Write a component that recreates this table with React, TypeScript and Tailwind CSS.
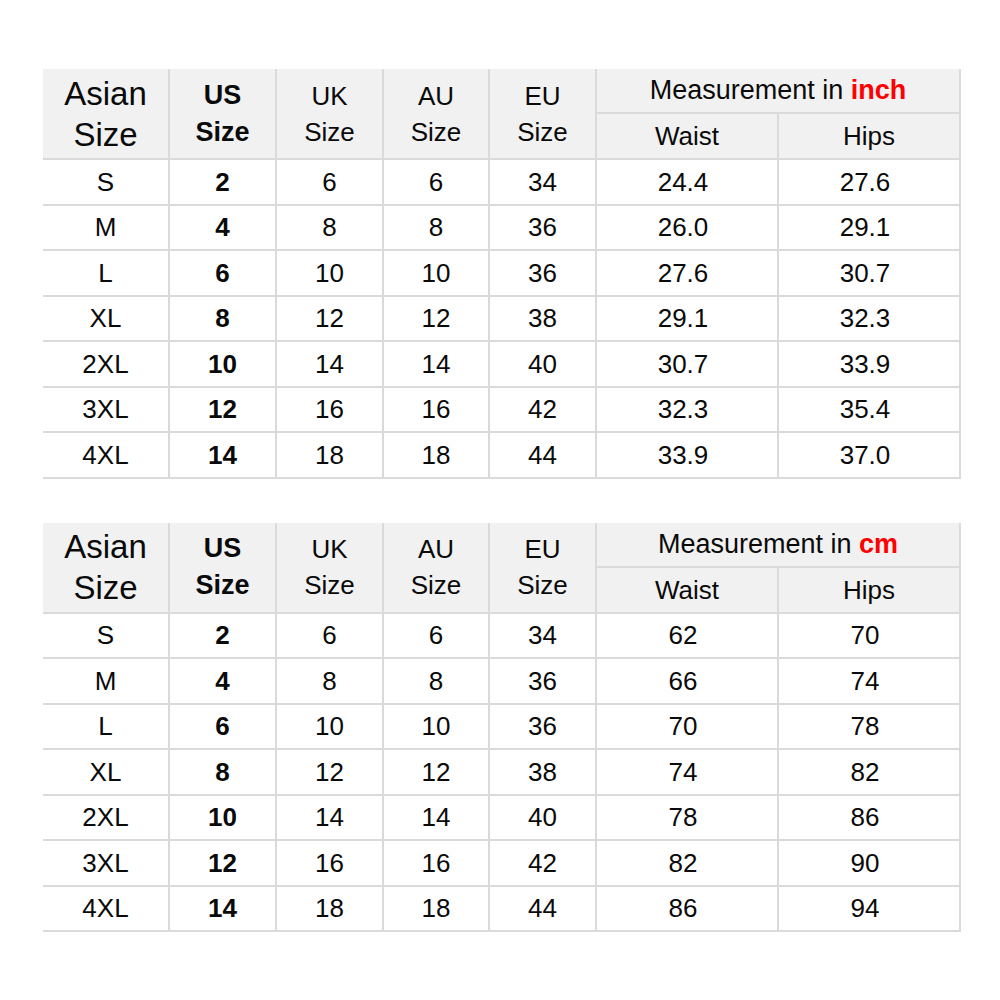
import React from 'react';

type Row = [string, string, string, string, string, string, string];

const INCH_ROWS: Row[] = [
  ['S', '2', '6', '6', '34', '24.4', '27.6'],
  ['M', '4', '8', '8', '36', '26.0', '29.1'],
  ['L', '6', '10', '10', '36', '27.6', '30.7'],
  ['XL', '8', '12', '12', '38', '29.1', '32.3'],
  ['2XL', '10', '14', '14', '40', '30.7', '33.9'],
  ['3XL', '12', '16', '16', '42', '32.3', '35.4'],
  ['4XL', '14', '18', '18', '44', '33.9', '37.0'],
];

const CM_ROWS: Row[] = [
  ['S', '2', '6', '6', '34', '62', '70'],
  ['M', '4', '8', '8', '36', '66', '74'],
  ['L', '6', '10', '10', '36', '70', '78'],
  ['XL', '8', '12', '12', '38', '74', '82'],
  ['2XL', '10', '14', '14', '40', '78', '86'],
  ['3XL', '12', '16', '16', '42', '82', '90'],
  ['4XL', '14', '18', '18', '44', '86', '94'],
];

const cell = 'border-2 border-[#dadada] text-center align-middle p-0';

const SizeTable = ({ unit, rows }: { unit: string; rows: Row[] }) => (
  <table className="table-fixed border-collapse w-[918px] text-[#0a0a0a] text-[26px] leading-none">
    <colgroup>
      <col className="w-[126px]" />
      <col className="w-[107px]" />
      <col className="w-[107px]" />
      <col className="w-[106px]" />
      <col className="w-[107px]" />
      <col className="w-[182px]" />
      <col className="w-[182px]" />
    </colgroup>
    <thead className="bg-[#f1f1f1]">
      <tr className="h-[44px]">
        <th rowSpan={2} className={`${cell} border-l-0 border-t-0 font-normal text-[33px] leading-[41px]`}>
          Asian
          <br />
          Size
        </th>
        <th rowSpan={2} className={`${cell} border-t-0 font-bold text-[27px] leading-[37px]`}>
          US
          <br />
          Size
        </th>
        <th rowSpan={2} className={`${cell} border-t-0 font-normal leading-[36px]`}>
          UK
          <br />
          Size
        </th>
        <th rowSpan={2} className={`${cell} border-t-0 font-normal leading-[36px]`}>
          AU
          <br />
          Size
        </th>
        <th rowSpan={2} className={`${cell} border-t-0 font-normal leading-[36px]`}>
          EU
          <br />
          Size
        </th>
        <th colSpan={2} className={`${cell} border-t-0 font-normal text-[27px]`}>
          Measurement in <span className="font-bold text-[#ff0000]">{unit}</span>
        </th>
      </tr>
      <tr className="h-[46px]">
        <th className={`${cell} font-normal`}>Waist</th>
        <th className={`${cell} font-normal`}>Hips</th>
      </tr>
    </thead>
    <tbody>
      {rows.map((row) => (
        <tr key={row[0]} className="h-[45.5px]">
          {row.map((value, i) => (
            <td
              key={i}
              className={`${cell} ${i === 0 ? 'border-l-0' : ''} ${i === 1 ? 'font-bold' : ''} ${i === 5 ? 'pr-[8px]' : ''} ${i === 6 ? 'pr-2' : ''}`}
            >
              {value}
            </td>
          ))}
        </tr>
      ))}
    </tbody>
  </table>
);

export default function App() {
  return (
    <div className="w-[1000px] h-[1000px] bg-white pl-[43px] pt-[69px] font-['Liberation_Sans',Arial,sans-serif]">
      <div className="flex flex-col gap-[44px]">
        <SizeTable unit="inch" rows={INCH_ROWS} />
        <SizeTable unit="cm" rows={CM_ROWS} />
      </div>
    </div>
  );
}
